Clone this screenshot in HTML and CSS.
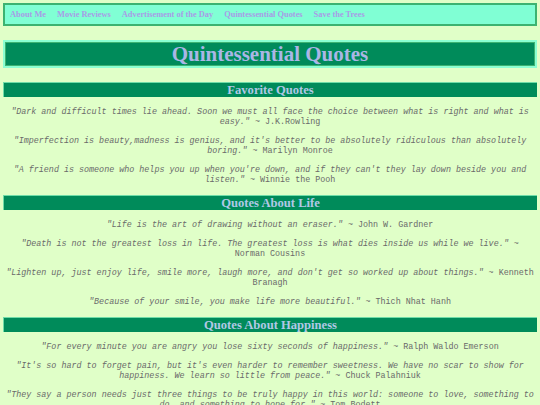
FILE: index.html
```html
<!DOCTYPE html>
<html>
<head>
<meta charset="utf-8">
<link rel="stylesheet" href="styles.css">
</head>
<body>
<nav class="nav">
  <a href="#">About Me</a>
  <a href="#">Movie Reviews</a>
  <a href="#">Advertisement of the Day</a>
  <a href="#">Quintessential Quotes</a>
  <a href="#">Save the Trees</a>
</nav>
<h1 class="title">Quintessential Quotes</h1>

<h2 class="section">Favorite Quotes</h2>
<p class="quote"><em>"Dark and difficult times lie ahead. Soon we must all face the choice between what is right and what is easy."</em> ~ J.K.Rowling</p>
<p class="quote"><em>"Imperfection is beauty,madness is genius, and it's better to be absolutely ridiculous than absolutely boring."</em> ~ Marilyn Monroe</p>
<p class="quote"><em>"A friend is someone who helps you up when you're down, and if they can't they lay down beside you and listen."</em> ~ Winnie the Pooh</p>

<h2 class="section">Quotes About Life</h2>
<p class="quote"><em>"Life is the art of drawing without an eraser."</em> ~ John W. Gardner</p>
<p class="quote"><em>"Death is not the greatest loss in life. The greatest loss is what dies inside us while we live."</em> ~ Norman Cousins</p>
<p class="quote"><em>"Lighten up, just enjoy life, smile more, laugh more, and don't get so worked up about things."</em> ~ Kenneth Branagh</p>
<p class="quote"><em>"Because of your smile, you make life more beautiful."</em> ~ Thich Nhat Hanh</p>

<h2 class="section">Quotes About Happiness</h2>
<p class="quote"><em>"For every minute you are angry you lose sixty seconds of happiness."</em> ~ Ralph Waldo Emerson</p>
<p class="quote"><em>"It's so hard to forget pain, but it's even harder to remember sweetness. We have no scar to show for happiness. We learn so little from peace."</em> ~ Chuck Palahniuk</p>
<p class="quote"><em>"They say a person needs just three things to be truly happy in this world: someone to love, something to do, and something to hope for."</em> ~ Tom Bodett</p>
</body>
</html>
```

FILE: styles.css
```css
html, body {
  margin: 0;
  padding: 0;
}
body {
  background: #e0ffc8;
  padding: 3px 3px 0 3px;
  font-family: "Liberation Serif", "Times New Roman", serif;
}
.nav {
  display: flex;
  gap: 11px;
  align-items: center;
  height: 19px;
  padding: 0 5px;
  background: #80ffd4;
  border: 2px solid #3cb371;
}
.nav a {
  font-family: "Liberation Serif", serif;
  font-weight: bold;
  font-size: 8.4px;
  color: #a89ce6;
  text-decoration: none;
  white-space: nowrap;
}
.title {
  margin: 14px 0 14px 0;
  height: 24px;
  line-height: 24px;
  background: #008b5a;
  border: 2px solid #8affd2;
  box-shadow: inset 0 0 0 1px #3cb371;
  text-align: center;
  font-size: 21px;
  font-weight: bold;
  color: #aab6e6;
}
.section {
  margin: 10px 0;
  height: 14px;
  line-height: 14px;
  background: #008b5a;
  border-top: 1px solid #6fdca8;
  border-left: 1px solid #6fdca8;
  text-align: center;
  font-size: 12.6px;
  font-weight: bold;
  color: #b0c8e6;
}
.quote {
  margin: 9px 1px;
  font-family: "Liberation Mono", "Courier New", monospace;
  font-size: 8.4px;
  line-height: 10px;
  color: #6a6a6a;
  text-align: center;
}
.quote em {
  font-style: italic;
}
```
